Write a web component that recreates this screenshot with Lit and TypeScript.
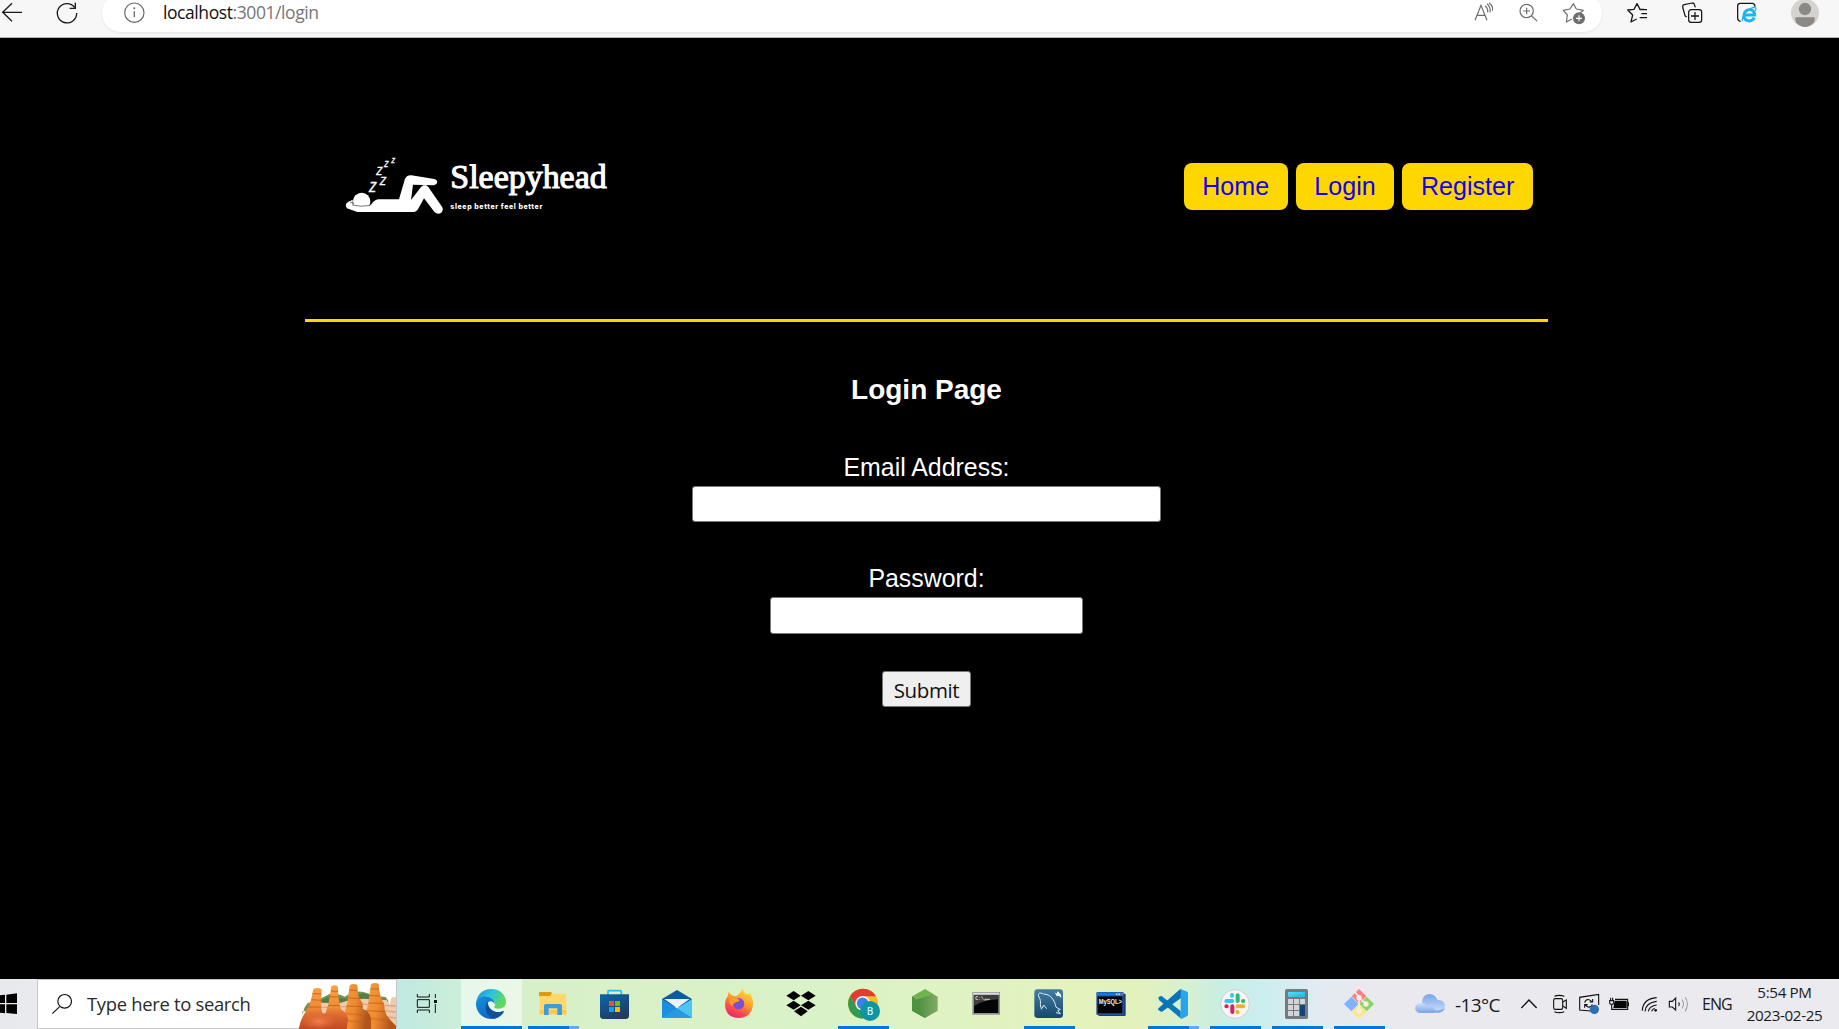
import { LitElement, html, svg, css, SVGTemplateResult } from "lit";
import { customElement } from "lit/decorators.js";
import { classMap } from "lit/directives/class-map.js";

// Icons are drawn on a grid of three units to the pixel.
const UNIT = 3;
const icon = (x: number, y: number, w: number, h: number, body: SVGTemplateResult) => html`
  <svg class="icon" width=${w / UNIT} height=${h / UNIT} viewBox="${x} ${y} ${w} ${h}" aria-hidden="true">${body}</svg>
`;

@customElement("browser-bar")
class BrowserBar extends LitElement {
  static styles = css`
    :host { display: flex; height: 37px; background: #f7f7f7; border-bottom: 1px solid #b4b4b4; overflow: hidden; }
    .icon { display: block; flex: none; }
    .pill { display: flex; box-sizing: border-box; width: 1500px; height: 38px; margin-top: -6px; padding-top: 6px;
      background: #fff; border-radius: 19px; box-shadow: 0 1px 3px rgba(0, 0, 0, 0.08); }
    .url { flex: 1; padding-left: 13px; font: 17.5px/25px "Open Sans", "Noto Sans", sans-serif; color: #767676; letter-spacing: -0.42px; white-space: nowrap; }
    .host { color: #111; }
  `;
  render() {
    return html`
      ${icon(0, 0, 306, 96, svg`
        <g fill="none" stroke="#1b1b1b" stroke-width="4">
          <path d="M66 37H8M36 10L8 37L36 64"/>
          <path d="M224 22A29 29 0 1 0 230 39M226 8V25H209"/>
        </g>`)}
      <div class="pill">
        ${icon(306, 0, 144, 96, svg`
          <circle cx="403" cy="38" r="29" fill="none" stroke="#6b6b6b" stroke-width="3.6"/>
          <path d="M403 34V52" stroke="#6b6b6b" stroke-width="4"/><circle cx="403" cy="25" r="3" fill="#6b6b6b"/>`)}
        <div class="url"><span class="host">localhost</span>:3001/login</div>
        ${icon(90, 0, 396, 96, svg`
          <g fill="none" stroke="#6e6e6e" stroke-width="3.6">
            <path d="M105 61L123 16L141 61M111 46H135"/>
            <path d="M135 17Q145 25 143 37M141 11Q153 21 150 37M147 9Q161 18 157 32"/>
            <circle cx="260" cy="33" r="20"/><path d="M274 47L291 63M250 33H270M260 23V43"/>
            <path d="M396 57L379 66L382 45L370 31L390 27L400 11L409 27L430 31L421 38" stroke-linejoin="round"/>
          </g>
          <circle cx="417" cy="55" r="18" fill="#6e6e6e"/>
          <path d="M408 55H426M417 46V64" stroke="#fff" stroke-width="3.6"/>`)}
      </div>
      ${icon(486, 0, 711, 96, svg`
        <g fill="none" stroke="#161616" stroke-width="3.8" stroke-linejoin="round">
          <path d="M590 57L573 66L578 45L563 30L582 28L591 11L600 28L612 28"/>
          <path d="M599 29H621M604 41H621M599 53H621"/>
          <path d="M740 51L735 47L728 21Q727 16 732 14L757 9Q762 9 763 13L766 22"/>
          <rect x="746" y="29" width="39" height="38" rx="8"/>
          <path d="M765 36V60M753 48H777"/>
          <path d="M902 64Q893 63 893 55V18Q893 10 901 10H938Q945 11 945 20"/>
        </g>
        <g fill="none" stroke="#1eb4ec">
          <path d="M912 45H944C944 23 913 24 912 45C911 67 936 67 943 53" stroke-width="9"/>
          <path d="M907 64C903 48 928 22 944 22C950 23 948 29 946 33" stroke-width="3.500"/>
        </g>
        <circle cx="1095" cy="39" r="42" fill="#d5d3d0"/>
        <circle cx="1095" cy="27" r="18.500" fill="#8c8885"/>
        <path d="M1066 52H1124Q1126 62 1121 68Q1110 80 1095 81Q1080 80 1069 68Q1064 62 1066 52Z" fill="#8c8885"/>`)}
    `;
  }
}

@customElement("login-page")
class LoginPage extends LitElement {
  static styles = css`
    :host { display: block; background: #000; color: #fff; font-family: "Liberation Sans", Arial, sans-serif; overflow: hidden; }
    .container { width: 1243px; margin-left: 305px; }
    .header { display: flex; justify-content: space-between; align-items: flex-start; box-sizing: border-box; height: 284px;
      padding: 0 15px 0 35px; border-bottom: 3px solid #ffd700; }
    .logo { display: block; margin-top: 112px; }
    .nav { display: flex; gap: 8px; margin-top: 125px; }
    .link { padding: 0 18.600px; border-radius: 8px; background: #ffd700; color: #1400f0; font-size: 25.1px; line-height: 47px; text-decoration: none; }
    .form { display: flex; flex-direction: column; align-items: center; padding-top: 52px; }
    .title { margin: 0 0 46px; font-size: 28px; line-height: 32px; font-weight: 700; }
    .label { font-size: 24.9px; line-height: 30px; margin-bottom: 4px; }
    .field { display: block; box-sizing: border-box; border: 1px solid #767676; border-radius: 3px; background: #fff; padding: 0; outline: none; }
    .email { width: 469px; height: 36px; margin-bottom: 41px; }
    .password { width: 313px; height: 37px; margin-bottom: 37px; }
    .submit { box-sizing: border-box; width: 89px; height: 36px; padding: 1px 0 0; border: 1px solid #767676; border-radius: 3px; background: #efefef;
      color: #111; font: 20.5px/30px "Open Sans", "Noto Sans", sans-serif; letter-spacing: -0.4px; }
    .brand { font: 500 102px "Liberation Serif", serif; fill: #fff; stroke: #fff; stroke-width: 3.4px; }
    .tagline { font: 800 21px Inter, sans-serif; fill: #fff; }
    .zed { font-family: "Open Sans", sans-serif; font-weight: 400; font-style: italic; fill: #fff; stroke: #fff; stroke-width: 0.8px; }
  `;
  render() {
    return html`
      <div class="container">
        <header class="header">
          <svg class="logo" width="270" height="70" viewBox="120 60 810 210">
            <circle cx="185" cy="214" r="26" fill="#fff"/>
            <path d="M158 209L144 216Q136 221 138 230Q141 236 149 238L172 246H343Q350 245 354 238L372 205L404 247Q414 255 424 248Q431 241 427 232L385 171Q374 159 363 171L333 210L339 164L402 166Q411 164 412 156Q411 148 403 147L334 136Q321 135 315 146L297 208H235Q223 209 214 223Q204 230 181 229L158 223Z" fill="#fff"/>
            <path d="M150 216L160 220M157 225Q183 232 211 226" stroke="#000" stroke-width="1.600" fill="none"/>
            <text class="zed" x="207" y="186" font-size="52">z</text>
            <text class="zed" x="239" y="164" font-size="45">z</text>
            <text class="zed" x="229" y="135" font-size="43">z</text>
            <text class="zed" x="252" y="111" font-size="32">z</text>
            <text class="zed" x="274" y="98" font-size="26">z</text>
            <text class="brand" x="451" y="173" textLength="469" lengthAdjust="spacingAndGlyphs">Sleepyhead</text>
            <text class="tagline" x="451" y="236" textLength="276" lengthAdjust="spacing">sleep better feel better</text>
          </svg>
          <nav class="nav">
            ${["Home", "Login", "Register"].map((name) => html`<a class="link" href="#">${name}</a>`)}
          </nav>
        </header>
        <form class="form">
          <h1 class="title">Login Page</h1>
          <label class="label" for="email">Email Address:</label>
          <input class="field email" id="email" type="email" />
          <label class="label" for="password">Password:</label>
          <input class="field password" id="password" type="password" />
          <button class="submit" type="button">Submit</button>
        </form>
      </div>
    `;
  }
}

interface App {
  x: number;
  art: SVGTemplateResult;
  open?: boolean;
  stacked?: boolean;
  active?: boolean;
}

const APPS: App[] = [
  { x: 3, open: true, active: true, art: svg`
    <defs>
      <linearGradient id="e1" x1="0" x2="1" y1="0" y2="0.5"><stop offset="0" stop-color="#1b8fd6"/><stop offset="0.5" stop-color="#2cc3df"/><stop offset="1" stop-color="#62d957"/></linearGradient>
      <linearGradient id="e2" x1="0" x2="0.6" y1="0" y2="1"><stop offset="0" stop-color="#1790dc"/><stop offset="1" stop-color="#0c68c4"/></linearGradient>
    </defs>
    <path d="M48 100C50 74 68 57 94 57C121 57 138 76 138 96C138 111 125 117 113 116C104 115 100 112 104 108C109 99 102 90 92 90C82 80 55 78 48 100Z" fill="url(#e1)"/>
    <path d="M48 99C52 82 69 76 84 81C98 85 105 95 104 103C98 89 84 92 80 104C76 121 88 141 108 145C73 154 46 128 48 99Z" fill="url(#e2)"/>
    <path d="M83 95C72 105 75 142 104 146C115 144 126 136 132 125C131 121 127 124 123 125C104 130 84 117 83 95Z" fill="#0f4f9b"/>` },
  { x: 189, open: true, stacked: true, art: svg`
    <rect x="237" y="66" width="38" height="14" rx="3" fill="#dd9a0b"/>
    <path d="M239 78H270L276 71H316Q319 71 319 75V133H239Z" fill="#ffd76b"/>
    <path d="M239 120H319V133H239Z" fill="#ffc94d"/>
    <path d="M252 135V108Q252 102 258 102H300Q306 102 306 108V135H292V115H266V135Z" fill="#3d9be0"/>` },
  { x: 375, art: svg`
    <defs><linearGradient id="s1" x1="0" x2="0.5" y1="0" y2="1"><stop offset="0" stop-color="#0867ad"/><stop offset="1" stop-color="#263a61"/></linearGradient></defs>
    <path d="M444 76V65Q444 62 447 62H481Q484 62 484 65V76" fill="none" stroke="#20c0ee" stroke-width="5"/>
    <path d="M420 73H507V137Q507 147 497 147H430Q420 147 420 137Z" fill="url(#s1)"/>
    <path d="M447 93H462V108H447Z" fill="#f25022"/><path d="M465 93H480V108H465Z" fill="#7fba00"/>
    <path d="M447 111H462V126H447Z" fill="#00a4ef"/><path d="M465 111H480V126H465Z" fill="#ffb900"/>` },
  { x: 561, art: svg`
    <path d="M606 87L651 60L696 87V110H606Z" fill="#0a5ba6"/>
    <path d="M613 87H689L651 114Z" fill="#f1f0f2"/>
    <path d="M606 87L696 143H606Z" fill="#1a8fdd"/><path d="M696 87L651 115L696 144Z" fill="#4bc5f3"/><path d="M651 115L606 143H696Z" fill="#2799e2"/>` },
  { x: 747, art: svg`
    <defs><linearGradient id="f1" x1="0.8" x2="0.3" y1="0" y2="1"><stop offset="0" stop-color="#ffe13c"/><stop offset="0.45" stop-color="#ff9a2a"/><stop offset="0.75" stop-color="#fb4a4f"/><stop offset="1" stop-color="#ee2270"/></linearGradient></defs>
    <path d="M806 66L815 76L827 79Q838 73 840 68L848 57Q851 70 864 74L869 69Q880 83 879 102Q876 143 836 144Q797 142 795 104Q795 88 803 78Z" fill="url(#f1)"/>
    <circle cx="836" cy="101" r="17" fill="#7850d0"/>
    <path d="M806 82Q817 76 825 84Q834 84 839 91Q837 97 827 97Q818 101 816 110Q806 97 806 82Z" fill="#ff9b29"/>` },
  { x: 933, art: svg`
    <path d="M1001 63L1022 77L1001 91L979 77ZM1045 63L1067 77L1045 91L1023 77ZM1001 92L1022 106L1001 119L979 106ZM1045 92L1067 106L1045 119L1023 106ZM1023 110L1043 124L1023 139L1002 124Z" fill="#050505"/>` },
  { x: 39, open: true, art: svg`
    <circle cx="129" cy="101" r="45" fill="#f5bd25"/>
    <path d="M90 79A45 45 0 0 1 168 79H129L110 112Z" fill="#df3c32"/>
    <path d="M90 79A45 45 0 0 0 127 146L148 112H110Z" fill="#319c4d"/>
    <circle cx="128" cy="100" r="22" fill="#fff"/><circle cx="128" cy="100" r="17.500" fill="#3f7fe8"/>
    <circle cx="150" cy="123" r="30" fill="#0b95a5"/>
    <text x="150" y="134" class="badge">B</text>` },
  { x: 225, art: svg`
    <defs><linearGradient id="n1" x1="0" x2="1" y1="0" y2="0"><stop offset="0" stop-color="#44853a"/><stop offset="1" stop-color="#7fab66"/></linearGradient></defs>
    <path d="M315 58L353 80V122L315 144L276 122V80Z" fill="url(#n1)"/>
    <path d="M315 58L339 72L289 89L276 80Z" fill="#6fb54b"/><path d="M276 80L289 89L315 144L276 122Z" fill="#4d9440"/>` },
  { x: 411, art: svg`
    <rect x="457" y="66" width="83" height="68" fill="#8c9095"/><rect x="459" y="68" width="79" height="6" fill="#d7dadd"/>
    <rect x="462" y="75" width="73" height="54" fill="#050505"/>
    <path d="M462 75H535V88Q490 90 462 108Z" fill="#3c3c3c"/>
    <text x="466" y="90" class="prompt">C:\\_</text><path d="M493 88H510" stroke="#eee" stroke-width="2.500"/>` },
  { x: 597, open: true, art: svg`
    <defs><linearGradient id="w1" x1="0" x2="0" y1="0" y2="1"><stop offset="0" stop-color="#417da4"/><stop offset="1" stop-color="#19486a"/></linearGradient></defs>
    <rect x="643" y="58" width="86" height="86" rx="10" fill="url(#w1)"/>
    <path d="M665 118C657 103 666 96 657 81C651 69 661 66 670 72C692 72 704 91 708 111Q714 116 721 118L713 122L721 131L708 128M666 115L671 105L680 116" fill="none" stroke="#e4eef5" stroke-width="3"/>
    <path d="M703 65L709 71L714 64L723 74L724 84L717 78L710 78Z" fill="#f4f8fa"/>` },
  { x: 783, art: svg`
    <rect x="835" y="71" width="82" height="67" rx="3" fill="#1c3f7a"/>
    <rect x="829" y="66" width="82" height="69" rx="3" fill="#2357a4"/><rect x="831" y="68" width="78" height="9" fill="#1778de"/>
    <rect x="833" y="79" width="74" height="51" fill="#050505"/>
    <path d="M888 70H893V76H888ZM895 70H900V76H895Z" fill="#9ac4f2"/><path d="M902 70H908V76H902Z" fill="#e35d45"/>
    <text x="836" y="102" class="mysql" textLength="70" lengthAdjust="spacingAndGlyphs">MySQL&gt;</text>` },
  { x: 9, open: true, stacked: true, art: svg`
    <path d="M55 82L64 77L122 123V145L57 90Z" fill="#0879bd"/>
    <path d="M55 120Q52 117 57 113L120 58L124 61V83L65 126Z" fill="#0873b6"/>
    <path d="M120 58Q123 56 127 59L142 65Q144 67 144 70V134L142 138L126 146Q122 147 119 144Q122 142 122 138V64Z" fill="#27a4ed"/>` },
  { x: 195, open: true, art: svg`
    <circle cx="285" cy="102" r="43" fill="#f8f7f6" stroke="#cfcecc" stroke-width="3"/>
    <g stroke-width="12" stroke-linecap="round" fill="none">
      <path d="M259 93H277M276 75V77" stroke="#36c5f0"/><path d="M293 76V93M309 93H310" stroke="#2eb67d"/>
      <path d="M277 109V126M259 109H260" stroke="#e01e5a"/><path d="M293 109H310M293 126V127" stroke="#ecb22e"/>
    </g>` },
  { x: 381, open: true, art: svg`
    <defs><linearGradient id="c1" x1="0" x2="1" y1="0" y2="1"><stop offset="0" stop-color="#55e2fa"/><stop offset="1" stop-color="#23ace5"/></linearGradient></defs>
    <rect x="435" y="57" width="69" height="90" rx="5" fill="#737a80"/><rect x="444" y="66" width="51" height="15" fill="url(#c1)"/>
    <path d="M444 87H459V102H444ZM462 87H477V102H462ZM480 87H495V102H480ZM444 105H459V120H444ZM462 105H477V120H462ZM444 123H459V138H444ZM462 123H477V138H462Z" fill="#d3d5d7"/>
    <path d="M480 105H495V138H480Z" fill="#12437f"/>` },
  { x: 567, open: true, art: svg`
    <path d="M657 57L679 79L657 101L635 79Z" fill="#ff7f80"/><path d="M634 80L656 102L634 124L612 102Z" fill="#80b3ff"/>
    <path d="M680 80L702 102L680 124L658 102Z" fill="#8dd35f"/><path d="M657 103L679 125L657 147L635 125Z" fill="#ffe680"/>
    <path d="M645 67L657 80V124M657 84L678 101" fill="none" stroke="#f1efe9" stroke-width="5"/>
    <g fill="#f1efe9"><circle cx="657" cy="83" r="8"/><circle cx="678" cy="102" r="8"/><circle cx="657" cy="123" r="8"/></g>` },
];

@customElement("task-bar")
class TaskBar extends LitElement {
  static styles = css`
    :host { display: flex; height: 50px; overflow: hidden; color: #1a1a1a; font-family: "Open Sans", "Noto Sans", sans-serif;
      background: linear-gradient(90deg, #e8e9ec 0, #e8eaed 37px, #bfe9e2 397px, #cdeed7 461px, #d7f0cb 530px, #daf1c7 640px, #daf2c8 820px, #def2c4 930px, #e4f2bd 1060px, #e3f1bd 1140px, #d9f0cd 1180px, #c9eee4 1222px, #cbeeee 1260px, #e3ebf1 1320px, #e9e9ee 1370px, #ebebef 100%); }
    .icon { display: block; flex: none; }
    .search { display: flex; box-sizing: border-box; width: 360px; border: 1px solid #c5c5c7; background: #fff; }
    .hint { flex: 1; font-size: 18.4px; line-height: 48px; letter-spacing: -0.3px; color: #2b2b2b; white-space: nowrap; }
    .apps { display: flex; flex: none; }
    .app { display: grid; width: 62px; height: 50px; flex: none; }
    .app > * { grid-area: 1 / 1; }
    .active { background: linear-gradient(90deg, rgba(255, 255, 255, 0.5) 61px, transparent 61px); }
    .line { align-self: end; width: 51px; height: 3px; margin-left: 5px; background: #0078d7; }
    .active .line { width: 61px; margin-left: 0; }
    .stacked { background: linear-gradient(90deg, #0078d7 41px, #64aae8 41px); }
    .badge { font: 600 30px "Open Sans", sans-serif; fill: #d6f1f3; text-anchor: middle; }
    .prompt { font: 700 14px "Liberation Mono", monospace; fill: #e4e4e4; }
    .mysql { font: 700 20px "Liberation Sans", sans-serif; fill: #f2f2f2; }
    .temp { width: 56px; font-size: 19px; line-height: 53px; letter-spacing: -0.6px; }
    .lang { width: 34px; font-size: 16px; line-height: 51px; letter-spacing: -1px; }
    .clock { width: 97px; padding-top: 2px; text-align: center; font-size: 15.2px; line-height: 23px; letter-spacing: -0.35px; white-space: nowrap; }
  `;
  render() {
    return html`
      ${icon(0, 27, 111, 150, svg`<path d="M0 76L15 74V99H0ZM19 74L51 70V99H19ZM0 103H15V130L0 128ZM19 103H51V132L19 129Z" fill="#000"/>`)}
      <div class="search">
        ${icon(114, 30, 147, 144, svg`<circle cx="194" cy="94" r="20.500" fill="none" stroke="#111" stroke-width="3.600"/><path d="M179 110L157 131" stroke="#111" stroke-width="3.600"/>`)}
        <div class="hint">Type here to search</div>
        ${icon(888, 30, 300, 147, svg`
          <defs>
            <linearGradient id="r1" x1="0" x2="0" y1="0" y2="1"><stop offset="0" stop-color="#f9a13f"/><stop offset="0.5" stop-color="#f08c38"/><stop offset="0.72" stop-color="#d9642f"/><stop offset="1" stop-color="#c24a22"/></linearGradient>
            <linearGradient id="r2" x1="0" x2="1" y1="0" y2="0.3"><stop offset="0" stop-color="#f8a040"/><stop offset="0.55" stop-color="#ee8930"/><stop offset="1" stop-color="#b0541a"/></linearGradient>
            <radialGradient id="r3"><stop offset="0" stop-color="#f4814e"/><stop offset="1" stop-color="#e86b38" stop-opacity="0"/></radialGradient>
          </defs>
          <g transform="translate(885 24)">
            <path d="M22 112L28 90L38 75L60 70L92 54Q110 42 135 50L150 56L165 46Q195 35 215 45L245 55L272 57L280 68V100H22Z" fill="#739353"/>
            <path d="M80 66Q108 50 132 60L155 62L205 46L270 64V90H80Z" fill="#567e40"/>
            <path d="M42 96L76 74L132 76L158 68L205 62L275 66L283 80L290 58L303 57V150H42Z" fill="#efcbae"/>
            <path d="M80 88L158 86M190 78L225 80M262 82L303 84M264 98L303 102M270 116L303 120" fill="none" stroke="#dba688" stroke-width="4"/>
            <path d="M228 19Q239 11 251 18L253 38Q256 54 260 64L267 78Q268 98 274 110Q286 129 306 146V153H205L214 98Q222 78 222 58Z" fill="url(#r2)"/>
            <path d="M164 22Q175 14 187 21L189 48L194 62L203 76V92Q226 100 228 126V153H140L150 98L157 74Z" fill="url(#r2)"/>
            <path d="M55 33Q67 27 80 34L78 68L80 98Q84 111 92 104L101 75L109 25Q119 18 129 26L130 58L138 94Q157 104 159 124L155 153H11Q16 125 29 106L44 78L49 62Z" fill="url(#r1)"/>
            <ellipse cx="72" cy="130" rx="52" ry="26" fill="url(#r3)"/>
            <path d="M52 47L79 48M49 65L78 67M39 87L79 87M108 39L129 40M105 56L130 57M99 82L134 83M163 36L187 38M160 60L193 62M154 84L204 86M226 33L252 33M223 53L256 54M219 75L266 76M214 98L270 101" fill="none" stroke="#ad5822" stroke-width="3" opacity="0.7"/>
            <path d="M153 106L220 113M152 128L224 134M216 120L280 128" stroke="#b25a20" stroke-width="7" opacity="0.28"/>
          </g>`)}
      </div>
      ${icon(1191, 27, 192, 150, svg`
        <path d="M1252 72V81H1288V72M1252 129V120H1288V129" fill="none" stroke="#111" stroke-width="3"/>
        <path d="M1252 89H1288V112H1252Z" fill="none" stroke="#111" stroke-width="3"/>
        <path d="M1306 72V84M1306 102V129" stroke="#111" stroke-width="3"/><path d="M1302 90H1311V99H1302Z" fill="#111"/>`)}
      <div class="apps">
        ${APPS.map((app) => html`
          <div class=${classMap({ app: true, active: !!app.active })}>
            <svg class="icon" width="62" height="50" viewBox="${app.x} 27 186 150" aria-hidden="true">${app.art}</svg>
            ${app.open ? html`<div class=${classMap({ line: true, stacked: !!app.stacked })}></div>` : null}
          </div>`)}
      </div>
      ${icon(-27, 27, 192, 150, svg`
        <defs><linearGradient id="k1" x1="0" x2="0" y1="0" y2="1"><stop offset="0" stop-color="#7ba6e8"/><stop offset="1" stop-color="#cfe0fb"/></linearGradient>
        <linearGradient id="k2" x1="0" x2="0" y1="0" y2="1"><stop offset="0" stop-color="#cfe0fa"/><stop offset="1" stop-color="#7da5e9"/></linearGradient></defs>
        <path d="M66 98Q67 73 88 72Q107 72 112 90Q134 88 135 108Q135 126 117 129H64Z" fill="url(#k1)"/>
        <path d="M62 129Q46 128 45 113Q47 98 63 99Q76 100 80 110Q93 102 102 113Q107 122 102 129Z" fill="url(#k2)"/>
        <path d="M60 128H118Q130 126 134 115Q121 123 105 121L80 124L50 122Q54 127 60 128Z" fill="#81a9eb"/>`)}
      <div class="temp">-13°C</div>
      ${icon(333, 27, 573, 150, svg`
        <g fill="none" stroke="#111" stroke-width="3.300">
          <path d="M364 114L387 90L410 114" stroke-width="4"/>
          <rect x="461" y="86" width="27" height="32" rx="5"/><path d="M489 96L499 90V115L489 108M463 79Q477 73 493 79M463 125Q477 131 493 125"/>
          <path d="M571 123L539 120V82L596 73V105"/>
          <path d="M554 98Q557 87 567 89L576 95M578 87V96H569M577 103Q573 113 564 111L555 105M554 113V104H563"/>
          <path d="M629 92H641V99Q641 103 635 103Q629 103 629 99ZM632 92V83M638 92V83M635 103V118H645"/>
          <path d="M645 88H683V118H645" /><path d="M685 97V109" stroke-width="4"/>
          <path d="M727 122Q728 87 770 83M735 124Q737 98 770 94M745 124Q748 108 770 105M755 124Q758 117 764 115"/>
          <path d="M808 94H817L827 84V120L817 111H808Z"/><path d="M836 97Q840 102 836 108"/>
          <path d="M846 89Q855 102 846 115M855 81Q870 102 855 124" stroke="#a4a4a8"/>
        </g>
        <path d="M644 92H680V114H640Z" fill="#050505"/><circle cx="767" cy="121" r="4" fill="#111"/><circle cx="583" cy="118" r="14" fill="#2a70b8"/>`)}
      <div class="lang">ENG</div>
      <div class="clock"><div>5:54 PM</div><div>2023-02-25</div></div>
    `;
  }
}

@customElement("app-root")
class AppRoot extends LitElement {
  static styles = css`
    :host { display: grid; grid-template-rows: 38px 1fr 50px; width: 1839px; height: 1029px; overflow: hidden; background: #000; }
  `;
  render() {
    return html`<browser-bar></browser-bar><login-page></login-page><task-bar></task-bar>`;
  }
}
